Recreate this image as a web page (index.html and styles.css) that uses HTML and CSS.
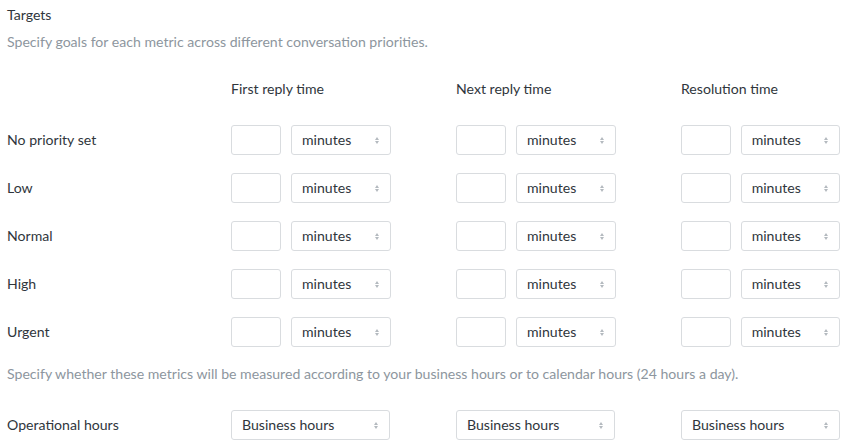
FILE: index.html
```html
<!DOCTYPE html>
<html>
<head>
<meta charset="utf-8">
<link rel="stylesheet" href="styles.css">
</head>
<body>
<div class="page">
  <div class="title">Targets</div>
  <div class="hint">Specify goals for each metric across different conversation priorities.</div>

  <div class="grid header-row">
    <div></div>
    <div class="col-head">First reply time</div>
    <div class="col-head">Next reply time</div>
    <div class="col-head">Resolution time</div>
  </div>

  <div class="rows">
    <div class="grid row">
      <div class="label">No priority set</div>
      <div class="pair"><div class="num"></div><div class="select">minutes<span class="arrows"></span></div></div>
      <div class="pair"><div class="num"></div><div class="select">minutes<span class="arrows"></span></div></div>
      <div class="pair"><div class="num"></div><div class="select">minutes<span class="arrows"></span></div></div>
    </div>
    <div class="grid row">
      <div class="label">Low</div>
      <div class="pair"><div class="num"></div><div class="select">minutes<span class="arrows"></span></div></div>
      <div class="pair"><div class="num"></div><div class="select">minutes<span class="arrows"></span></div></div>
      <div class="pair"><div class="num"></div><div class="select">minutes<span class="arrows"></span></div></div>
    </div>
    <div class="grid row">
      <div class="label">Normal</div>
      <div class="pair"><div class="num"></div><div class="select">minutes<span class="arrows"></span></div></div>
      <div class="pair"><div class="num"></div><div class="select">minutes<span class="arrows"></span></div></div>
      <div class="pair"><div class="num"></div><div class="select">minutes<span class="arrows"></span></div></div>
    </div>
    <div class="grid row">
      <div class="label">High</div>
      <div class="pair"><div class="num"></div><div class="select">minutes<span class="arrows"></span></div></div>
      <div class="pair"><div class="num"></div><div class="select">minutes<span class="arrows"></span></div></div>
      <div class="pair"><div class="num"></div><div class="select">minutes<span class="arrows"></span></div></div>
    </div>
    <div class="grid row">
      <div class="label">Urgent</div>
      <div class="pair"><div class="num"></div><div class="select">minutes<span class="arrows"></span></div></div>
      <div class="pair"><div class="num"></div><div class="select">minutes<span class="arrows"></span></div></div>
      <div class="pair"><div class="num"></div><div class="select">minutes<span class="arrows"></span></div></div>
    </div>
  </div>

  <div class="hint hint-2">Specify whether these metrics will be measured according to your business hours or to calendar hours (24 hours a day).</div>

  <div class="grid row op-row">
    <div class="label">Operational hours</div>
    <div><div class="select wide">Business hours<span class="arrows"></span></div></div>
    <div><div class="select wide">Business hours<span class="arrows"></span></div></div>
    <div><div class="select wide">Business hours<span class="arrows"></span></div></div>
  </div>
</div>
</body>
</html>
```

FILE: styles.css
```css
* { box-sizing: border-box; }
html, body { margin: 0; padding: 0; background: #fff; }
body {
  font-family: Lato, "Liberation Sans", sans-serif;
  font-size: 14.1px;
  color: #30363c;
}
.page { padding: 5px 0 0 7px; }
.title { line-height: 20px; }
.hint { margin-top: 7px; line-height: 20px; color: #8d969e; }
.grid {
  display: grid;
  grid-template-columns: 224px 225px 225px 159px;
  align-items: center;
}
.header-row { margin-top: 27px; line-height: 20px; }
.rows { margin-top: 26px; display: flex; flex-direction: column; gap: 18px; }
.row { height: 30px; }
.label { line-height: 20px; padding-bottom: 1px; }
.pair { display: flex; gap: 10px; }
.num {
  width: 50px; height: 30px;
  border: 1px solid #d9dcdf; border-radius: 3px; background: #fff;
}
.select {
  position: relative;
  width: 100px; height: 30px;
  border: 1px solid #d9dcdf; border-radius: 3px; background: #fff;
  padding-left: 10px;
  line-height: 28px;
}
.select.wide { width: 159px; }
.arrows {
  position: absolute; right: 10px; top: 11px;
  width: 5px; height: 7px;
}
.arrows::before, .arrows::after {
  content: ""; position: absolute; left: 0;
  border-left: 2.5px solid transparent; border-right: 2.5px solid transparent;
}
.arrows::before { top: 0; border-bottom: 3px solid #b4babf; }
.arrows::after { bottom: 0; border-top: 3px solid #b4babf; }
.hint-2 { margin-top: 17px; }
.op-row { margin-top: 26px; }
```
